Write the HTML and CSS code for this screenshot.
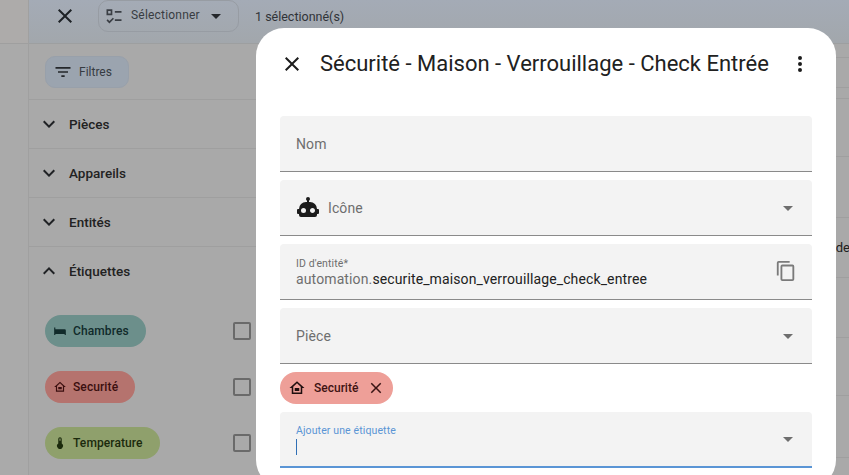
FILE: index.html
```html
<!DOCTYPE html>
<html lang="fr">
<head>
<meta charset="utf-8">
<title>Sécurité</title>
<link rel="stylesheet" href="styles.css">
</head>
<body>
<div class="page">
  <aside class="rail"></aside>
  <div class="main">
    <header class="topbar">
      <svg class="ic-x" viewBox="0 0 24 24"><path d="M19 6.41 17.59 5 12 10.59 6.41 5 5 6.41 10.59 12 5 17.59 6.41 19 12 13.41 17.59 19 19 17.59 13.41 12z"/></svg>
      <div class="select-btn">
        <svg class="ic-sel" viewBox="0 0 24 24"><path d="M3 4h7v7H3zm2 2v3h3V6zM13 6h8v2h-8zM13 16h8v2h-8zM10.6 14 12 15.4 6.5 21 3 17.5 4.4 16l2.1 2.1z"/></svg>
        <span>Sélectionner</span>
        <svg class="ic-drop" viewBox="0 0 24 24"><path d="M7 10l5 5 5-5z"/></svg>
      </div>
      <span class="count">1 sélectionné(s)</span>
    </header>
    <div class="content">
      <section class="filters">
        <div class="filter-head">
          <div class="filter-btn">
            <svg viewBox="0 0 24 24"><path d="M6 13h12v-2H6zM3 6v2h18V6zm7 12h4v-2h-4z"/></svg>
            <span>Filtres</span>
          </div>
        </div>
        <div class="group"><svg viewBox="0 0 24 24"><path d="M7.41 8.58 12 13.17l4.59-4.59L18 10l-6 6-6-6z"/></svg><span>Pièces</span></div>
        <div class="group"><svg viewBox="0 0 24 24"><path d="M7.41 8.58 12 13.17l4.59-4.59L18 10l-6 6-6-6z"/></svg><span>Appareils</span></div>
        <div class="group"><svg viewBox="0 0 24 24"><path d="M7.41 8.58 12 13.17l4.59-4.59L18 10l-6 6-6-6z"/></svg><span>Entités</span></div>
        <div class="group open"><svg viewBox="0 0 24 24"><path d="M7.41 15.41 12 10.83l4.59 4.58L18 14l-6-6-6 6z"/></svg><span>Étiquettes</span></div>
        <ul class="labels">
          <li class="label-row">
            <span class="tag tag-teal"><svg viewBox="0 0 24 24"><path d="M2 6h2v3h16a2 2 0 0 1 2 2v8h-2v-2H4v2H2z"/></svg>Chambres</span>
            <span class="check"></span>
          </li>
          <li class="label-row">
            <span class="tag tag-red"><svg viewBox="0 0 24 24"><path d="M12 3 2 12h3v8h14v-8h3zm5 15H7v-7.800l5-4.500 5 4.500zm-8-2h6v-4H9z"/></svg>Securité</span>
            <span class="check"></span>
          </li>
          <li class="label-row">
            <span class="tag tag-green"><svg viewBox="0 0 24 24"><path d="M15 13V5a3 3 0 0 0-6 0v8a5 5 0 1 0 6 0zM12 4a1 1 0 0 1 1 1v3h-2V5a1 1 0 0 1 1-1z"/></svg>Temperature</span>
            <span class="check"></span>
          </li>
        </ul>
      </section>
      <section class="table">
        <div class="trow"></div>
        <div class="trow"></div>
        <div class="trow"></div>
        <div class="trow"></div>
        <div class="trow"></div>
        <div class="trow cell-text"><span>de</span></div>
        <div class="trow"></div>
        <div class="trow"></div>
        <div class="trow"></div>
      </section>
    </div>
  </div>
</div>

<div class="dialog">
  <div class="dialog-head">
    <svg class="dlg-x" viewBox="0 0 24 24"><path d="M19 6.41 17.59 5 12 10.59 6.41 5 5 6.41 10.59 12 5 17.59 6.41 19 12 13.41 17.59 19 19 17.59 13.41 12z"/></svg>
    <h1>Sécurité - Maison - Verrouillage - Check Entrée</h1>
    <svg class="dlg-menu" viewBox="0 0 24 24"><path d="M12 16a2 2 0 1 1 0 4 2 2 0 0 1 0-4zm0-6a2 2 0 1 1 0 4 2 2 0 0 1 0-4zm0-6a2 2 0 1 1 0 4 2 2 0 0 1 0-4z"/></svg>
  </div>
  <div class="form">
    <div class="field"><span class="placeholder">Nom</span></div>
    <div class="field">
      <svg class="robot" viewBox="0 0 24 24"><path d="M12,2A2,2 0 0,1 14,4C14,4.74 13.6,5.39 13,5.73V7H14A7,7 0 0,1 21,14H22A1,1 0 0,1 23,15V18A1,1 0 0,1 22,19H21V20A2,2 0 0,1 19,22H5A2,2 0 0,1 3,20V19H2A1,1 0 0,1 1,18V15A1,1 0 0,1 2,14H3A7,7 0 0,1 10,7H11V5.73C10.4,5.39 10,4.74 10,4A2,2 0 0,1 12,2M7.5,13A2.5,2.5 0 0,0 5,15.5A2.5,2.5 0 0,0 7.5,18A2.5,2.5 0 0,0 10,15.5A2.5,2.5 0 0,0 7.5,13M16.5,13C15.12,13 14,14.12 14,15.5C14,16.88 15.12,18 16.5,18C17.88,18 19,16.88 19,15.5C19,14.12 17.88,13 16.5,13Z"/></svg>
      <span class="placeholder">Icône</span>
      <svg class="caret" viewBox="0 0 24 24"><path d="M7 10l5 5 5-5z"/></svg>
    </div>
    <div class="field entity">
      <div class="entity-text">
        <span class="mini">ID d'entité*</span>
        <span class="value"><span class="prefix">automation.</span>securite_maison_verrouillage_check_entree</span>
      </div>
      <svg class="copy" viewBox="0 0 24 24"><path d="M19 21H8V7h11m0-2H8a2 2 0 0 0-2 2v14a2 2 0 0 0 2 2h11a2 2 0 0 0 2-2V7a2 2 0 0 0-2-2m-3-4H4a2 2 0 0 0-2 2v14h2V3h12z"/></svg>
    </div>
    <div class="field">
      <span class="placeholder">Pièce</span>
      <svg class="caret" viewBox="0 0 24 24"><path d="M7 10l5 5 5-5z"/></svg>
    </div>
    <div class="chip-row">
      <span class="chip">
        <svg class="chip-home" viewBox="0 0 24 24"><path d="M12 3 2 12h3v8h14v-8h3zm5 15H7v-7.800l5-4.500 5 4.500zm-8-2h6v-4H9z"/></svg>
        <span>Securité</span>
        <svg class="chip-x" viewBox="0 0 24 24"><path d="M19 6.41 17.59 5 12 10.59 6.41 5 5 6.41 10.59 12 5 17.59 6.41 19 12 13.41 17.59 19 19 17.59 13.41 12z"/></svg>
      </span>
    </div>
    <div class="field focused">
      <div class="entity-text">
        <span class="mini">Ajouter une étiquette</span>
        <span class="cursor"></span>
      </div>
      <svg class="caret" viewBox="0 0 24 24"><path d="M7 10l5 5 5-5z"/></svg>
    </div>
  </div>
</div>
</body>
</html>
```

FILE: styles.css
```css
* { box-sizing: border-box; }
html, body { margin: 0; height: 100%; overflow: hidden; }
body { font-family: Roboto, "Liberation Sans", sans-serif; background: #a9a9a9; color: #1c1c1c; }
svg { display: block; fill: currentColor; flex: none; }

.page { display: flex; width: 849px; height: 475px; overflow: hidden; }
.rail { width: 29px; flex: none; border-right: 1px solid #a0a0a0; background-image: linear-gradient(#adabaa 0 43px, #9f9f9f 43px 44px, #aaa 44px); }
.main { flex: 1; min-width: 0; display: flex; flex-direction: column; }

.topbar { height: 44px; flex: none; display: flex; align-items: center; background: linear-gradient(#a4abb6, #a2a7ac); border-bottom: 1px solid #9d9fa0; padding: 0 0 11px 24px; }
.ic-x { width: 24px; height: 24px; color: #1d2125; }
.select-btn { width: 141px; height: 32px; margin-left: 21px; border: 1px solid #979ca3; border-radius: 10px; display: flex; align-items: center; padding-left: 5px; font-size: 12px; letter-spacing: .2px; color: #383c42; }
.select-btn span { margin-bottom: 2px; }
.ic-sel { width: 20px; height: 20px; margin-right: 7px; color: #3a3e44; }
.ic-drop { width: 24px; height: 24px; margin-left: 4px; color: #24272b; }
.count { margin-left: 16px; font-size: 12.5px; color: #303338; white-space: nowrap; }

.content { flex: 1; display: flex; min-height: 0; }
.filters { width: 227px; flex: none; background: #a9a9a9; }
.filter-head { height: 56px; padding: 12px 0 0 16px; border-bottom: 1px solid #9f9f9f; }
.filter-btn { width: 84px; height: 32px; border: 1px solid #98a0aa; border-radius: 10px; background: #9ba4af; display: flex; align-items: center; padding-left: 7px; font-size: 12px; color: #363b42; }
.filter-btn svg { width: 20px; height: 20px; margin-right: 6px; color: #24272b; }
.group { height: 49px; display: flex; align-items: center; padding-left: 8px; border-bottom: 1px solid #9f9f9f; font-size: 13.5px; font-weight: 500; color: #222; }
.group svg { width: 24px; height: 24px; margin-right: 8px; color: #202225; }
.group.open { border-bottom: 0; padding-bottom: 2px; }
.labels { list-style: none; margin: 0; padding: 7px 0 0 16px; }
.label-row { height: 56px; display: flex; align-items: center; justify-content: space-between; padding-right: 5px; }
.tag { height: 32px; border-radius: 16px; display: flex; align-items: center; padding: 0 17px 0 8px; font-size: 12px; font-weight: 500; letter-spacing: .1px; }
.tag svg { width: 14px; height: 14px; margin-right: 6px; }
.tag-teal { background: #6c8f8b; color: #102a2a; }
.tag-red { background: #b5736e; color: #3b0f0f; }
.tag-green { background: #8fa06c; color: #1b2a0c; }
.check { width: 18px; height: 18px; border: 2px solid #6a6a6a; border-radius: 2px; }

.table { flex: 1; min-width: 0; display: grid; grid-template-rows: 14px 30px 11px 58px 61px 60px 60px 58px 62px; align-content: start; background: #a9a9a9; }
.trow { border-bottom: 1px solid #9f9f9f; }
.cell-text { display: flex; align-items: center; justify-content: flex-end; font-size: 13px; color: #202020; overflow: hidden; }
.cell-text span { margin-right: -1px; }

.dialog { position: absolute; left: 256px; top: 28px; width: 580px; height: 460px; background: #fff; border-radius: 28px; padding: 0 24px; }
.dialog-head { height: 72px; display: flex; align-items: center; margin-bottom: 16px; }
.dlg-x { width: 24px; height: 24px; color: #1c1c1c; margin-right: 16px; }
.dialog-head h1 { margin: -2px 0 0; font-size: 22px; font-weight: 400; color: #212121; white-space: nowrap; flex: 1; }
.dlg-menu { width: 24px; height: 24px; color: #1c1c1c; }
.form { display: flex; flex-direction: column; gap: 8px; }
.field { height: 56px; background: #f3f3f3; border-bottom: 1px solid #8a8a8a; border-radius: 4px 4px 0 0; display: flex; align-items: center; padding: 0 12px 0 16px; font-size: 14px; }
.placeholder { color: #6e6e6e; flex: 1; letter-spacing: .1px; }
.robot { width: 24px; height: 24px; color: #1c1c1c; margin: -2px 8px 0 0; }
.caret { width: 24px; height: 24px; color: #6e6e6e; }
.entity-text { flex: 1; display: flex; flex-direction: column; padding-top: 2px; }
.mini { font-size: 10.5px; line-height: 12px; letter-spacing: .12px; color: #6e6e6e; }
.value { font-size: 14px; line-height: 18px; letter-spacing: .12px; color: #212121; }
.prefix { color: #6e6e6e; }
.copy { width: 22px; height: 22px; color: #7a7a7a; margin: -2px 3px 0 0; }
.chip-row { display: flex; }
.chip { height: 32px; border-radius: 16px; background: #ee9f98; display: flex; align-items: center; padding: 0 8px; font-size: 12px; font-weight: 500; color: #3f1313; }
.chip-home { width: 18px; height: 18px; color: #1f0f0f; margin-right: 8px; }
.chip-x { width: 18px; height: 18px; margin-left: 9px; color: #3a1414; }
.focused { border-bottom: 2px solid #5a95d5; }
.focused .mini { color: #5a95d5; }
.cursor { width: 1px; height: 16px; background: #2f6fb5; margin-top: 2px; }
```
